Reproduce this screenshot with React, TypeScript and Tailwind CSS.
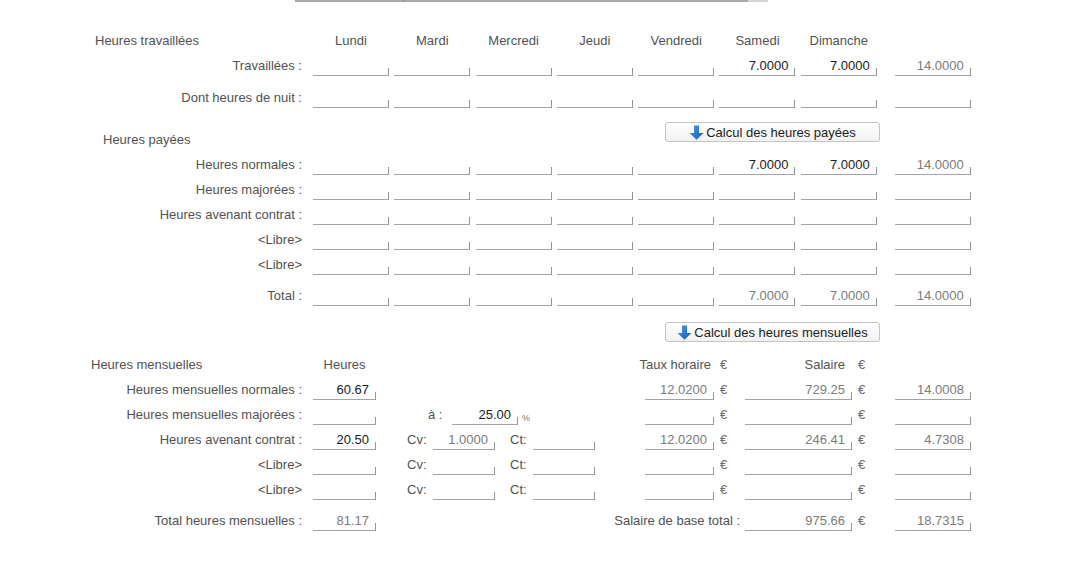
import React from "react";

type FieldProps = {
  w: string;
  value?: string;
  dark?: boolean;
};

// underline-style input like the old WinForms grid cells
const Field = ({ w, value = "", dark = false }: FieldProps) => (
  <div className={`flex items-end h-[20px] shrink-0 ${w}`}>
    <div
      className={`flex-1 h-full border-b border-[#a4a4a4] flex items-center justify-end pr-[6px] whitespace-nowrap ${
        dark ? "text-[#1c1c1c]" : "text-[#7c7c7c]"
      }`}
    >
      {value}
    </div>
    <div className="w-px h-[8px] bg-[#969696]" />
  </div>
);

const ArrowDown = () => (
  <svg width="15" height="15" viewBox="0 0 15 15" className="mr-[2px]">
    <defs>
      <linearGradient id="arr" x1="0" y1="0" x2="1" y2="1">
        <stop offset="0" stopColor="#4c9cf0" />
        <stop offset="1" stopColor="#1659b8" />
      </linearGradient>
    </defs>
    <path d="M5 0.5h5v7.5h4.5l-7 6.8-7-6.8h4.5z" fill="url(#arr)" />
  </svg>
);

const CalcButton = ({ label }: { label: string }) => (
  <button className="w-[215px] h-[20px] flex items-center justify-center rounded-[3px] border border-[#c4c4c4] bg-gradient-to-b from-white to-[#f1f1f1] text-[#1c1c1c] text-[13px] leading-none">
    <ArrowDown />
    {label}
  </button>
);

const Row = ({
  label,
  children,
  className = "",
}: {
  label: string;
  children: React.ReactNode;
  className?: string;
}) => (
  <div className={`flex items-center h-[25px] ${className}`}>
    <div className="w-[302px] text-right whitespace-nowrap">{label}</div>
    <div className="ml-[11px] flex items-center">{children}</div>
  </div>
);

const days = ["Lundi", "Mardi", "Mercredi", "Jeudi", "Vendredi", "Samedi", "Dimanche"];

const WeekFields = ({
  sat = "",
  sun = "",
  total = "",
  dark = false,
}: {
  sat?: string;
  sun?: string;
  total?: string;
  dark?: boolean;
}) => (
  <>
    <div className="flex items-center gap-[5.3px]">
      <Field w="w-[76px]" />
      <Field w="w-[76px]" />
      <Field w="w-[76px]" />
      <Field w="w-[76px]" />
      <Field w="w-[76px]" />
      <Field w="w-[76px]" value={sat} dark={dark} />
      <Field w="w-[76px]" value={sun} dark={dark} />
    </div>
    <div className="ml-[18px]">
      <Field w="w-[76px]" value={total} />
    </div>
  </>
);

const Euro = ({ w }: { w: string }) => (
  <div className={`${w} pl-[6px] text-[#6c6c6c] shrink-0`}>€</div>
);

const MonthTail = ({
  taux = "",
  salaire = "",
  last = "",
}: {
  taux?: string;
  salaire?: string;
  last?: string;
}) => (
  <>
    <Field w="w-[69px]" value={taux} />
    <Euro w="w-[31px]" />
    <Field w="w-[107px]" value={salaire} />
    <Euro w="w-[43px]" />
    <Field w="w-[76px]" value={last} />
  </>
);

const CvCt = ({ cv = "" }: { cv?: string }) => (
  <div className="w-[269px] flex items-center pl-[31px] shrink-0">
    <div className="w-[26px]">Cv:</div>
    <Field w="w-[62px]" value={cv} />
    <div className="w-[23px] ml-[15px]">Ct:</div>
    <Field w="w-[62px]" />
  </div>
);

export default function App() {
  return (
    <div className="w-[1068px] h-[561px] bg-white overflow-hidden font-['Liberation_Sans',Arial,sans-serif] text-[13px] text-[#525252] leading-none">
      {/* clipped control at the very top */}
      <div className="flex ml-[295px] h-[2px]">
        <div className="w-[108px] border-b-2 border-[#a9a9a9]" />
        <div className="w-px bg-[#8a8a8a]" />
        <div className="w-[344px] border-b-2 border-[#a9a9a9]" />
        <div className="w-[20px] border-b-2 border-[#d6d6d6]" />
      </div>

      {/* Heures travaillées */}
      <div className="flex items-center h-[25px] mt-[26px]">
        <div className="w-[313px] pl-[95px] whitespace-nowrap">Heures travaillées</div>
        <div className="flex gap-[5.3px]">
          {days.map((d) => (
            <div key={d} className="w-[76px] text-center">
              {d}
            </div>
          ))}
        </div>
      </div>
      <Row label="Travaillées :">
        <WeekFields sat="7.0000" sun="7.0000" total="14.0000" dark />
      </Row>
      <Row label="Dont heures de nuit :" className="mt-[7px]">
        <WeekFields />
      </Row>

      {/* Heures payées */}
      <div className="flex items-start h-[30px] mt-[12px]">
        <div className="w-[665px] pl-[103px] mt-[11px]">Heures payées</div>
        <CalcButton label="Calcul des heures payées" />
      </div>
      <Row label="Heures normales :">
        <WeekFields sat="7.0000" sun="7.0000" total="14.0000" dark />
      </Row>
      <Row label="Heures majorées :">
        <WeekFields />
      </Row>
      <Row label="Heures avenant contrat :">
        <WeekFields />
      </Row>
      <Row label="<Libre>">
        <WeekFields />
      </Row>
      <Row label="<Libre>">
        <WeekFields />
      </Row>
      <Row label="Total :" className="mt-[6px]">
        <WeekFields sat="7.0000" sun="7.0000" total="14.0000" />
      </Row>

      <div className="flex mt-[14px] pl-[665px]">
        <CalcButton label="Calcul des heures mensuelles" />
      </div>

      {/* Heures mensuelles */}
      <div className="flex items-center h-[25px] mt-[10px]">
        <div className="w-[313px] pl-[91px] whitespace-nowrap shrink-0">Heures mensuelles</div>
        <div className="w-[63px] text-center shrink-0">Heures</div>
        <div className="w-[338px] text-right pr-[3px] shrink-0">Taux horaire</div>
        <Euro w="w-[31px]" />
        <div className="w-[107px] text-right pr-[7px] shrink-0">Salaire</div>
        <Euro w="w-[43px]" />
      </div>
      <Row label="Heures mensuelles normales :">
        <Field w="w-[63px]" value="60.67" dark />
        <div className="w-[269px] shrink-0" />
        <MonthTail taux="12.0200" salaire="729.25" last="14.0008" />
      </Row>
      <Row label="Heures mensuelles majorées :">
        <Field w="w-[63px]" />
        <div className="w-[269px] flex items-center pl-[52px] shrink-0">
          <div className="w-[24px]">à :</div>
          <Field w="w-[66px]" value="25.00" dark />
          <div className="ml-[4px] mt-[8px] text-[9px] text-[#777]">%</div>
        </div>
        <MonthTail />
      </Row>
      <Row label="Heures avenant contrat :">
        <Field w="w-[63px]" value="20.50" dark />
        <CvCt cv="1.0000" />
        <MonthTail taux="12.0200" salaire="246.41" last="4.7308" />
      </Row>
      <Row label="<Libre>">
        <Field w="w-[63px]" />
        <CvCt />
        <MonthTail />
      </Row>
      <Row label="<Libre>">
        <Field w="w-[63px]" />
        <CvCt />
        <MonthTail />
      </Row>
      <Row label="Total heures mensuelles :" className="mt-[6px]">
        <Field w="w-[63px]" value="81.17" />
        <div className="w-[369px] text-right pr-[5px] whitespace-nowrap shrink-0">
          Salaire de base total :
        </div>
        <Field w="w-[107px]" value="975.66" />
        <Euro w="w-[43px]" />
        <Field w="w-[76px]" value="18.7315" />
      </Row>
    </div>
  );
}
